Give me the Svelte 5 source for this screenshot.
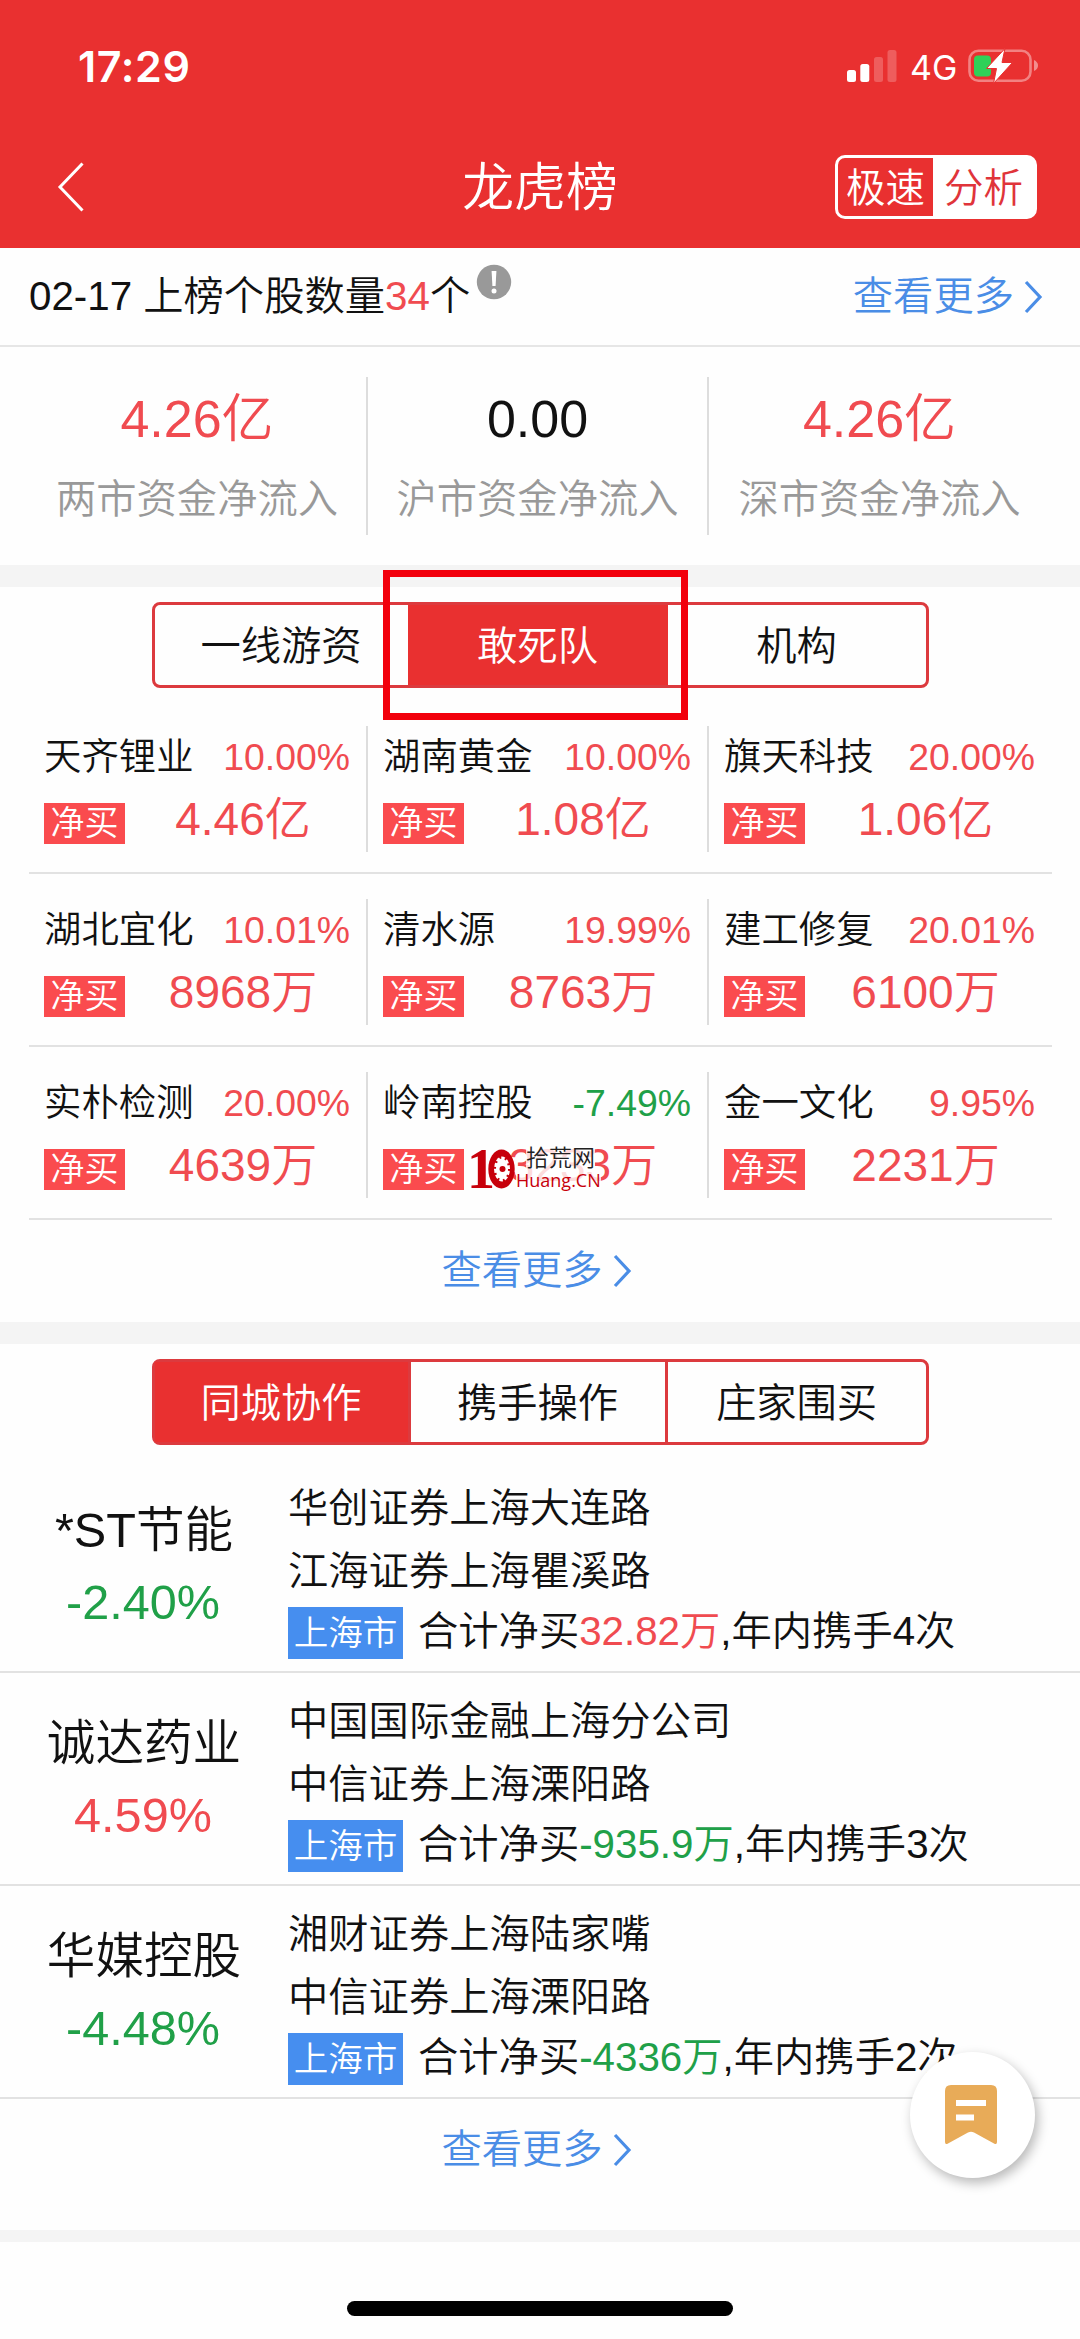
<script lang="ts">
  const flows = [
    { value: '4.26亿', label: '两市资金净流入', tone: 'up' },
    { value: '0.00', label: '沪市资金净流入', tone: 'flat' },
    { value: '4.26亿', label: '深市资金净流入', tone: 'up' }
  ];

  const stockRows = [
    [
      { name: '天齐锂业', pct: '10.00%', amount: '4.46亿' },
      { name: '湖南黄金', pct: '10.00%', amount: '1.08亿' },
      { name: '旗天科技', pct: '20.00%', amount: '1.06亿' }
    ],
    [
      { name: '湖北宜化', pct: '10.01%', amount: '8968万' },
      { name: '清水源', pct: '19.99%', amount: '8763万' },
      { name: '建工修复', pct: '20.01%', amount: '6100万' }
    ],
    [
      { name: '实朴检测', pct: '20.00%', amount: '4639万' },
      { name: '岭南控股', pct: '-7.49%', amount: '3233万', marked: true },
      { name: '金一文化', pct: '9.95%', amount: '2231万' }
    ]
  ];

  const coops = [
    { name: '*ST节能', pct: '-2.40%', seats: ['华创证券上海大连路', '江海证券上海瞿溪路'], city: '上海市', net: '32.82万', times: 4 },
    { name: '诚达药业', pct: '4.59%', seats: ['中国国际金融上海分公司', '中信证券上海溧阳路'], city: '上海市', net: '-935.9万', times: 3 },
    { name: '华媒控股', pct: '-4.48%', seats: ['湘财证券上海陆家嘴', '中信证券上海溧阳路'], city: '上海市', net: '-4336万', times: 2 }
  ];

  const traderTabs = ['一线游资', '敢死队', '机构'];
  const coopTabs = ['同城协作', '携手操作', '庄家围买'];

  let traderTab = $state(1);
  let coopTab = $state(0);

  const tone = (text: string) => (text.startsWith('-') ? 'down' : 'up');
</script>

{#snippet more()}
  <span class="more">
    查看更多
    <svg width="20" height="34" viewBox="0 0 20 34">
      <path d="M3 2 L17 17 L3 32" fill="none" stroke="#4a8de6" stroke-width="3.2" />
    </svg>
  </span>
{/snippet}

<div class="screen">
  <header>
    <div class="status">
      <span class="time">17:29</span>
      <div class="indicators">
        <svg width="50" height="32" viewBox="0 0 50 32">
          <rect x="0" y="20" width="9" height="12" rx="2.5" fill="#fff" />
          <rect x="13.3" y="14" width="9" height="18" rx="2.5" fill="#fff" />
          <rect x="27" y="7" width="9" height="25" rx="2.5" fill="#fff" opacity="0.22" />
          <rect x="40.5" y="0" width="9" height="32" rx="2.5" fill="#fff" opacity="0.22" />
        </svg>
        <span class="network">4G</span>
        <svg class="battery" width="72" height="36" viewBox="0 0 72 36">
          <rect x="1.5" y="2.8" width="61" height="30" rx="9" fill="none" stroke="#fff" stroke-opacity="0.4" stroke-width="2.6" />
          <path d="M66 12 Q70 14 70 17.5 Q70 21 66 23 Z" fill="#fff" opacity="0.45" />
          <rect x="6" y="7.5" width="17" height="21" rx="4" fill="#30d158" />
          <path d="M37 0.5 L18.5 20.5 H28.5 L25.5 35.5 L44.5 14.5 H34 Z" fill="#fff" stroke="#e93030" stroke-width="1" stroke-linejoin="round" />
        </svg>
      </div>
    </div>
    <nav>
      <svg class="back" width="28" height="50" viewBox="0 0 28 50">
        <path d="M25.5 1.5 L3 25 L25.5 48.5" fill="none" stroke="#fff" stroke-width="3" />
      </svg>
      <h1>龙虎榜</h1>
      <div class="mode">
        <span>极速</span>
        <span class="on">分析</span>
      </div>
    </nav>
  </header>

  <div class="summary">
    <div class="count">
      <span>02-17 上榜个股数量<span class="up">34</span>个</span>
      <svg width="36" height="36" viewBox="0 0 36 36">
        <circle cx="18" cy="18" r="17.2" fill="#999" />
        <path d="M15.6 7 H20.4 L19.6 22 H16.4 Z" fill="#fff" />
        <circle cx="18" cy="27" r="2.5" fill="#fff" />
      </svg>
    </div>
    {@render more()}
  </div>

  <div class="flows">
    {#each flows as flow}
      <div class="flow">
        <strong class={flow.tone}>{flow.value}</strong>
        <span>{flow.label}</span>
      </div>
    {/each}
  </div>

  <section class="traders">
    <div class="tabs">
      {#each traderTabs as tab, i}
        <button class:active={traderTab === i} onclick={() => (traderTab = i)}>{tab}</button>
      {/each}
      <div class="highlight"></div>
    </div>
    {#each stockRows as row}
      <div class="stock-row">
        {#each row as stock}
          <div class="stock">
            <div class="line">
              <span class="name">{stock.name}</span>
              <span class="pct {tone(stock.pct)}">{stock.pct}</span>
            </div>
            <div class="line">
              <span class="tag">净买</span>
              <span class="amount up">{stock.amount}</span>
            </div>
            {#if stock.marked}
              <div class="watermark">
                <span class="one">1</span>
                <svg width="27" height="40" viewBox="0 0 27 40">
                  <ellipse cx="13.5" cy="20" rx="13.2" ry="19.5" fill="#c7000b" />
                  <ellipse cx="14" cy="20" rx="8" ry="12.5" fill="#fff" />
                  <ellipse cx="14" cy="20" rx="7.5" ry="12" fill="none" stroke="#c7000b" stroke-width="3" stroke-dasharray="2 4.2" />
                  <circle cx="14.5" cy="20" r="3" fill="#c7000b" />
                </svg>
                <div class="site">
                  <span class="cn">拾荒网</span>
                  <span class="en">Huang.CN</span>
                </div>
              </div>
            {/if}
          </div>
        {/each}
      </div>
    {/each}
    <div class="footer">{@render more()}</div>
  </section>

  <section class="coop">
    <div class="tabs">
      {#each coopTabs as tab, i}
        <button class:active={coopTab === i} onclick={() => (coopTab = i)}>{tab}</button>
      {/each}
    </div>
    <div class="coop-list">
      {#each coops as coop}
        <div class="coop-row">
          <div class="who">
            <span class="coop-name">{coop.name}</span>
            <span class="coop-pct {tone(coop.pct)}">{coop.pct}</span>
          </div>
          <div class="detail">
            {#each coop.seats as seat}
              <div class="seat">{seat}</div>
            {/each}
            <div class="total">
              <span class="city">{coop.city}</span>
              <span class="sum">合计净买<span class={tone(coop.net)}>{coop.net}</span>,年内携手{coop.times}次</span>
            </div>
          </div>
        </div>
      {/each}
    </div>
    <div class="footer last">{@render more()}</div>
  </section>

  <div class="home"><div class="home-bar"></div></div>

  <div class="fab">
    <svg width="52" height="60" viewBox="0 0 52 60">
      <path d="M6 0 H46 Q52 0 52 6 V57 Q52 60 49 58.5 L29 47.5 Q26 46 23 47.5 L3 58.5 Q0 60 0 57 V6 Q0 0 6 0 Z" fill="#e8ab58" />
      <path d="M11 18 H41 M11 32.5 H29" stroke="#fff" stroke-width="6" />
    </svg>
  </div>
</div>

<style>
  :global(body) {
    margin: 0;
    background: #fff;
  }

  .screen {
    position: relative;
    width: 1080px;
    height: 2339px;
    overflow: hidden;
    display: flex;
    flex-direction: column;
    background: #fefefe;
    color: #111;
    font-family: "Liberation Sans", "Noto Sans CJK SC", sans-serif;
    font-size: 40.3px;
    font-weight: 350;
    line-height: 1;
    white-space: nowrap;
  }

  .up {
    color: #f04b50;
  }

  .down {
    color: #20a048;
  }

  header {
    height: 248px;
    background: #e93030;
    color: #fff;
  }

  .status {
    display: flex;
    justify-content: space-between;
    height: 125px;
    padding: 0 40px 0 78px;
  }

  .time {
    margin-top: 45px;
    font-family: Inter, sans-serif;
    font-size: 43px;
    font-weight: 600;
    letter-spacing: 0.6px;
  }

  .indicators {
    display: flex;
    align-items: center;
    height: 34px;
    margin-top: 49px;
  }

  .network {
    width: 48px;
    margin: 3px 10px 0 13px;
    font-family: Inter, sans-serif;
    font-size: 34px;
    font-weight: 400;
  }

  nav {
    display: grid;
    grid-template-columns: 1fr auto 1fr;
    align-items: center;
    height: 124px;
    padding: 0 43px 0 57px;
  }

  h1 {
    margin: 3px 14px 0 0;
    font-size: 51.8px;
    font-weight: 350;
  }

  .mode {
    display: flex;
    justify-self: end;
    box-sizing: border-box;
    width: 202px;
    height: 64px;
    border: 3px solid #fff;
    border-radius: 10px;
    line-height: 60px;
    font-size: 39.5px;
  }

  .mode span {
    width: 95px;
    text-align: center;
  }

  .mode .on {
    flex: 1;
    background: #fff;
    color: #e0343a;
  }

  .summary {
    display: flex;
    align-items: center;
    justify-content: space-between;
    box-sizing: border-box;
    height: 99px;
    padding: 2px 37px 0 29px;
    border-bottom: 2px solid #e6e6e6;
  }

  .count {
    display: flex;
    align-items: center;
  }

  .count svg {
    margin: 0 0 31px 6px;
  }

  .more {
    display: inline-flex;
    align-items: center;
    gap: 9px;
    color: #4a8de6;
  }

  .flows {
    display: grid;
    grid-template-columns: 340px 341px 1fr;
    height: 158px;
    padding: 30px 30px 30px 28px;
  }

  .flow {
    display: flex;
    flex-direction: column;
    align-items: center;
  }

  .flow:not(:last-child),
  .stock:not(:last-child) {
    border-right: 2px solid #ddd;
  }

  .flow strong {
    margin-top: 16px;
    font-size: 52px;
    font-weight: 350;
  }

  .flow span {
    margin-top: 35px;
    color: #999;
  }

  section {
    border-top: 22px solid #f4f4f4;
  }

  .tabs {
    position: relative;
    display: grid;
    grid-template-columns: 253px 260px 1fr;
    box-sizing: border-box;
    width: 777px;
    height: 86px;
    margin: 15px 0 0 152px;
    border: 3px solid #dc3a3e;
    border-radius: 8px;
  }

  button {
    padding: 4px 1px 0 0;
    border: 0;
    background: none;
    color: #111;
    font: inherit;
  }

  button + button {
    border-left: 3px solid #dc3a3e;
  }

  button.active {
    background: #e93030;
    color: #fff;
  }

  .traders button {
    border-left: 0;
  }

  .coop .tabs {
    grid-template-columns: 253px 257px 1fr;
  }

  /* red marker frame over the selected tab */
  .highlight {
    position: absolute;
    left: 228px;
    top: -35px;
    box-sizing: border-box;
    width: 305px;
    height: 150px;
    border: 7px solid #f2000c;
  }

  .stock-row {
    display: grid;
    grid-template-columns: 339px 341px 1fr;
    height: 126px;
    margin: 0 28px 0 29px;
    padding: 25px 0 20px;
    border-bottom: 2px solid #e2e2e2;
  }

  .tabs + .stock-row {
    padding-top: 38px;
  }

  .stock {
    position: relative;
    padding: 13px 16px 0 15px;
  }

  .stock:last-child {
    padding-right: 17px;
  }

  .line {
    display: flex;
    align-items: center;
    justify-content: space-between;
    height: 38px;
  }

  .line + .line {
    height: 58px;
    margin-top: 16px;
  }

  .name,
  .pct {
    font-size: 37.4px;
  }

  .tag {
    width: 81px;
    height: 41px;
    margin-top: 3px;
    background: #fa4b4e;
    color: #fff;
    font-size: 34px;
    line-height: 41px;
    text-align: center;
  }

  .amount {
    flex: 1;
    padding: 0 0 7px 11px;
    font-size: 46px;
    text-align: center;
  }

  .watermark {
    position: absolute;
    left: 104px;
    top: 75px;
    display: flex;
    align-items: center;
  }

  .one {
    width: 16px;
    color: #c7000b;
    font-family: "Liberation Serif", serif;
    font-size: 56px;
    font-weight: 700;
    line-height: 40px;
    text-indent: -5px;
  }

  .site {
    display: flex;
    flex-direction: column;
    margin-left: 1px;
  }

  .cn {
    align-self: flex-start;
    margin-left: 10px;
    background: rgba(255, 255, 255, 0.8);
    color: #222;
    font-size: 23px;
    line-height: 23px;
  }

  .en {
    align-self: flex-start;
    background: rgba(255, 255, 255, 0.8);
    color: #c7000b;
    font-family: "Open Sans", "Noto Sans", sans-serif;
    font-size: 18px;
    font-weight: 400;
    line-height: 20px;
  }

  .footer {
    display: flex;
    align-items: center;
    justify-content: center;
    box-sizing: border-box;
    height: 102px;
    padding: 0 7px 0 0;
  }

  .footer.last {
    margin-bottom: 29px;
  }

  .coop-list {
    margin-top: 15px;
  }

  .coop-row {
    display: flex;
    box-sizing: border-box;
    height: 213px;
    padding-top: 26px;
    border-bottom: 2px solid #e2e2e2;
  }

  .who {
    display: flex;
    flex-direction: column;
    align-items: center;
    box-sizing: border-box;
    width: 288px;
    padding: 20px 0 0;
    font-size: 48.6px;
  }

  .coop-pct {
    margin-top: 23px;
    padding-right: 2px;
  }

  .seat {
    height: 63px;
    line-height: 46px;
  }

  .total {
    display: flex;
    align-items: center;
    height: 52px;
    margin-top: -5px;
  }

  .city {
    width: 115px;
    height: 52px;
    margin-right: 15px;
    background: #468eef;
    color: #fff;
    font-size: 34.6px;
    line-height: 52px;
    text-align: center;
  }

  .sum {
    margin-bottom: 1px;
  }

  .home {
    flex: 1;
    display: flex;
    align-items: flex-end;
    justify-content: center;
    padding-bottom: 23px;
    border-top: 12px solid #f4f4f4;
  }

  .home-bar {
    width: 386px;
    height: 15px;
    border-radius: 8px;
    background: #000;
  }

  .fab {
    position: absolute;
    left: 910px;
    top: 2052px;
    display: flex;
    align-items: center;
    justify-content: center;
    box-sizing: border-box;
    width: 125px;
    height: 126px;
    padding-right: 4px;
    border-radius: 50%;
    background: #fff;
    box-shadow: 3px 5px 12px rgba(0, 0, 0, 0.28);
  }
</style>
